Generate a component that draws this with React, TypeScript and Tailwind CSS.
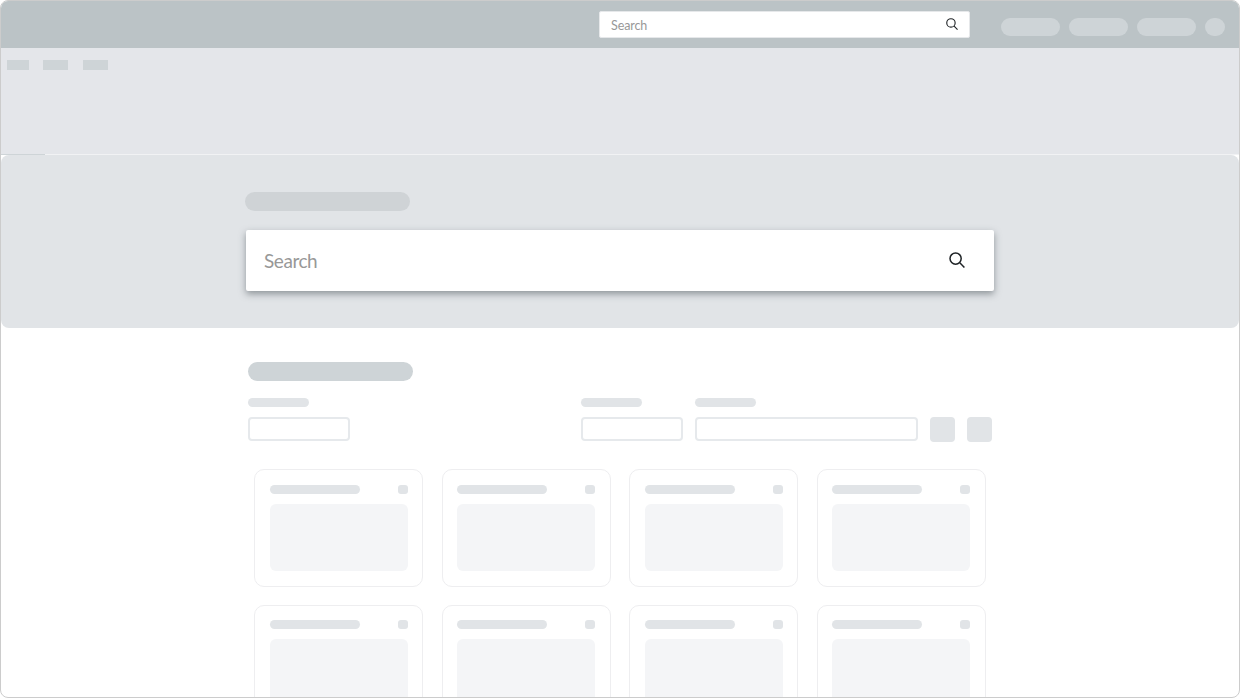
import React from "react";

const font = { fontFamily: 'Lato, "Noto Sans", sans-serif' };

function SearchIcon({ className }: { className: string }) {
  return (
    <svg viewBox="0 0 16 16" fill="none" className={className}>
      <circle cx="6.6" cy="6.6" r="5.6" stroke="#1f2326" strokeWidth="1.5" />
      <path d="M10.8 10.8 15.4 15.5" stroke="#1f2326" strokeWidth="1.5" />
    </svg>
  );
}

function Card() {
  return (
    <div className="h-[117.7px] rounded-[10px] border border-[#eeeef0] bg-white pl-[14.6px] pr-[14.4px] pt-[14.4px]">
      <div className="flex items-center justify-between">
        <div className="h-[9px] w-[90px] rounded-full bg-[#e1e4e7]" />
        <div className="h-[9px] w-[10px] rounded-[3px] bg-[#e1e4e7]" />
      </div>
      <div className="mt-[10px] h-[67px] rounded-[6px] bg-[#f4f5f7]" />
    </div>
  );
}

function Field({ width }: { width: string }) {
  return (
    <div className={width}>
      <div className="h-[9px] w-[61px] rounded-full bg-[#e1e4e7]" />
      <div className="mt-[10px] h-[24px] rounded-[4px] border-2 border-[#e6e9ec] bg-white" />
    </div>
  );
}

export default function App() {
  return (
    <div className="h-[698px] w-[1240px] overflow-hidden rounded-[8px] border border-[#cccccc] bg-white" style={font}>
      <header className="-mt-px flex h-[48px] items-center bg-[#bbc3c6] pl-[598px]">
        <div className="flex h-[27px] w-[371px] items-center justify-between rounded-[2px] border border-[#e6e8ea] bg-white pl-[11px] pr-[11px]">
          <span className="pt-[5px] text-[12.5px] tracking-[-0.1px] text-[#989898]">Search</span>
          <SearchIcon className="h-[12px] w-[12px]" />
        </div>
        <div className="ml-[31px] mt-[6px] flex items-center gap-[9px]">
          <div className="h-[18px] w-[59px] rounded-full bg-[#ced4d7]" />
          <div className="h-[18px] w-[59px] rounded-full bg-[#ced4d7]" />
          <div className="h-[18px] w-[59px] rounded-full bg-[#ced4d7]" />
          <div className="h-[18px] w-[20px] rounded-full bg-[#ced4d7]" />
        </div>
      </header>

      <nav className="h-[106px] bg-[#e4e6ea] pl-[6px] pt-[12px]">
        <div className="flex">
          <div className="h-[10px] w-[22px] bg-[#ced4d7]" />
          <div className="ml-[14px] h-[10px] w-[25px] bg-[#ced4d7]" />
          <div className="ml-[15px] h-[10px] w-[25px] bg-[#ced4d7]" />
        </div>
      </nav>

      <div className="h-px bg-[#f1f2f4]">
        <div className="h-px w-[44px] bg-[#ced4d7]" />
      </div>

      <section className="h-[173px] rounded-[8px] bg-[#e1e4e7] pl-[244px] pt-[37px]">
        <div className="h-[19px] w-[165px] rounded-full bg-[#cfd3d6]" />
        <div className="ml-px mt-[19px] flex h-[61px] w-[748px] items-center justify-between rounded-[2px] bg-white pl-[18px] pr-[29px] shadow-[0_3px_7px_rgba(60,70,75,0.5)]">
          <span className="pt-[1px] text-[19px] tracking-[-0.45px] text-[#989898]">Search</span>
          <SearchIcon className="-mt-[2px] h-[16px] w-[16px]" />
        </div>
      </section>

      <main className="pt-[34px]">
        <div className="pl-[247px]">
          <div className="h-[19px] w-[165px] rounded-full bg-[#ced4d7]" />
          <div className="mt-[17px] flex items-start">
            <Field width="w-[102px]" />
            <div className="ml-[231px]">
              <Field width="w-[102px]" />
            </div>
            <div className="ml-[12px]">
              <Field width="w-[223px]" />
            </div>
            <div className="ml-[12px] mt-[19px] h-[25px] w-[25px] rounded-[4px] bg-[#e1e4e7]" />
            <div className="ml-[12px] mt-[19px] h-[25px] w-[25px] rounded-[4px] bg-[#e1e4e7]" />
          </div>
        </div>
        <div className="ml-[253px] mt-[27.3px] grid w-[731.8px] grid-cols-4 gap-x-[18.6px] gap-y-[18px]">
          {Array.from({ length: 8 }, (_, i) => (
            <Card key={i} />
          ))}
        </div>
      </main>
    </div>
  );
}
